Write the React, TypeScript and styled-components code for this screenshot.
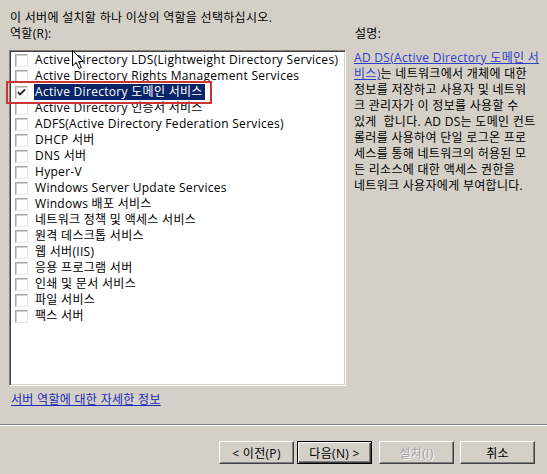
import React from "react";
import { styled, createGlobalStyle } from "styled-components";

const roles = [
  "Active Directory LDS(Lightweight Directory Services)",
  "Active Directory Rights Management Services",
  "Active Directory 도메인 서비스",
  "Active Directory 인증서 서비스",
  "ADFS(Active Directory Federation Services)",
  "DHCP 서버",
  "DNS 서버",
  "Hyper-V",
  "Windows Server Update Services",
  "Windows 배포 서비스",
  "네트워크 정책 및 액세스 서비스",
  "원격 데스크톱 서비스",
  "웹 서버(IIS)",
  "응용 프로그램 서버",
  "인쇄 및 문서 서비스",
  "파일 서비스",
  "팩스 서버",
];

const selectedIndex = 2;

const descriptionLines = [
  "정보를 저장하고 사용자 및 네트워",
  "크 관리자가 이 정보를 사용할 수",
  "있게  합니다. AD DS는 도메인 컨트",
  "롤러를 사용하여 단일 로그온 프로",
  "세스를 통해 네트워크의 허용된 모",
  "든 리소스에 대한 액세스 권한을",
  "네트워크 사용자에게 부여합니다.",
];

const CheckMark = () => (
  <svg width="9" height="9" viewBox="0 0 9 9">
    <polyline
      points="1,4 3,6.5 8,1.5"
      fill="none"
      stroke="#222"
      strokeWidth="1.8"
    />
  </svg>
);

const Pointer = () => (
  <svg width="13" height="20" viewBox="0 0 13 20">
    <path
      d="M0.5 0.5 L0.5 16 L4.2 12.4 L7 18.5 L9.3 17.5 L6.6 11.5 L11.5 11.5 Z"
      fill="#fff"
      stroke="#000"
      strokeWidth="1"
    />
  </svg>
);

export default function App() {
  return (
    <>
      <GlobalStyle />
      <Dialog>
        <Main>
          <Title>이 서버에 설치할 하나 이상의 역할을 선택하십시오.</Title>
          <Columns>
            <LeftColumn>
              <Label>역할(R):</Label>
              <ListBox>
                {roles.map((role, i) => (
                  <Row key={role}>
                    <CheckBox>{i === selectedIndex && <CheckMark />}</CheckBox>
                    <RowLabel $selected={i === selectedIndex}>{role}</RowLabel>
                  </Row>
                ))}
              </ListBox>
              <MoreLink>서버 역할에 대한 자세한 정보</MoreLink>
            </LeftColumn>
            <RightColumn>
              <Label>설명:</Label>
              <Description>
                <Line>
                  <InlineLink>AD DS(Active Directory 도메인 서</InlineLink>
                </Line>
                <Line>
                  <InlineLink>비스)</InlineLink>는 네트워크에서 개체에 대한
                </Line>
                {descriptionLines.map((l) => (
                  <Line key={l}>{l}</Line>
                ))}
              </Description>
            </RightColumn>
          </Columns>
        </Main>
        <Separator />
        <ButtonBar>
          <ButtonPair>
            <Button>&lt; 이전(P)</Button>
            <Button $default>다음(N) &gt;</Button>
          </ButtonPair>
          <Button disabled>설치(I)</Button>
          <Button>취소</Button>
        </ButtonBar>
        <Highlight />
        <Cursor>
          <Pointer />
        </Cursor>
      </Dialog>
    </>
  );
}

const GlobalStyle = createGlobalStyle`
  html, body {
    margin: 0;
    padding: 0;
    background: #d4d0c8;
  }
  body {
    font-family: "Open Sans", "Noto Sans CJK KR", sans-serif;
    font-size: 12px;
    letter-spacing: 0.3px;
    color: #000;
  }
`;

const Dialog = styled.div`
  position: relative;
  width: 547px;
  height: 474px;
  display: flex;
  flex-direction: column;
  background: #d4d0c8;
  overflow: hidden;
`;

const Main = styled.div`
  flex: 1;
  padding: 10px 0 0 9px;
`;

const Title = styled.div`
  line-height: 16px;
  padding-left: 1px;
  white-space: nowrap;
`;

const Columns = styled.div`
  display: grid;
  grid-template-columns: 337px 188px;
  column-gap: 8px;
`;

const LeftColumn = styled.div`
  display: flex;
  flex-direction: column;
`;

const RightColumn = styled.div`
  display: flex;
  flex-direction: column;
`;

const Label = styled.div`
  line-height: 16px;
  padding-left: 1px;
`;

const ListBox = styled.div`
  margin-top: 8px;
  height: 336px;
  box-sizing: border-box;
  background: #fff;
  border: 1px solid;
  border-color: #808080 #fff #fff #808080;
  box-shadow: inset 1px 1px 0 #404040, inset -1px -1px 0 #d4d0c8;
  padding: 1px 0 0 1px;
  overflow: hidden;
`;

const Row = styled.div`
  height: 16px;
  display: flex;
  align-items: center;
  white-space: nowrap;
`;

const CheckBox = styled.span`
  flex-shrink: 0;
  margin-left: 4px;
  width: 13px;
  height: 13px;
  box-sizing: border-box;
  border: 1px solid;
  border-color: #a8a8a8 #e4e4e4 #e4e4e4 #a8a8a8;
  box-shadow: inset 1px 1px 0 #d0d0d0;
  background: #fff;
  display: flex;
  align-items: center;
  justify-content: center;
`;

const RowLabel = styled.span<{ $selected?: boolean }>`
  margin-left: 6px;
  padding: 0 2px 0 1px;
  line-height: 16px;
  background: ${(p) => (p.$selected ? "#0a246a" : "transparent")};
  color: ${(p) => (p.$selected ? "#fff" : "#000")};
`;

const MoreLink = styled.a`
  margin-top: 6px;
  padding-left: 2px;
  line-height: 16px;
  color: #1c2bb8;
  text-decoration: underline;
  cursor: pointer;
`;

const Description = styled.div`
  margin-top: 8px;
  line-height: 16px;
`;

const Line = styled.div`
  white-space: pre;
`;

const InlineLink = styled.a`
  color: #2f3fcc;
  text-decoration: underline;
  cursor: pointer;
`;

const Separator = styled.div`
  height: 1px;
  background: #808080;
  border-bottom: 1px solid #fff;
`;

const ButtonBar = styled.div`
  display: flex;
  justify-content: flex-end;
  align-items: flex-start;
  gap: 6px;
  padding: 15px 12px 10px 0;
  height: 48px;
  box-sizing: border-box;
`;

const ButtonPair = styled.div`
  display: flex;
  gap: 3px;
  margin-right: 1px;
`;

const Button = styled.button<{ $default?: boolean }>`
  width: 75px;
  height: 23px;
  padding: 0;
  font: inherit;
  letter-spacing: inherit;
  background: #d4d0c8;
  color: #000;
  box-sizing: border-box;
  border: 1px solid;
  border-color: ${(p) =>
    p.$default ? "#000" : "#fff #404040 #404040 #fff"};
  box-shadow: ${(p) =>
    p.$default
      ? "inset 1px 1px 0 #fff, inset -1px -1px 0 #404040, inset -2px -2px 0 #808080"
      : "inset -1px -1px 0 #808080"};

  &:disabled {
    color: #a0a0a0;
    text-shadow: 1px 1px 0 #fff;
  }
`;

const Highlight = styled.div`
  position: absolute;
  left: 6px;
  top: 81px;
  width: 206px;
  height: 23px;
  box-sizing: border-box;
  border: 2px solid #cc3333;
  pointer-events: none;
`;

const Cursor = styled.div`
  position: absolute;
  left: 72px;
  top: 50px;
  line-height: 0;
  pointer-events: none;
`;
